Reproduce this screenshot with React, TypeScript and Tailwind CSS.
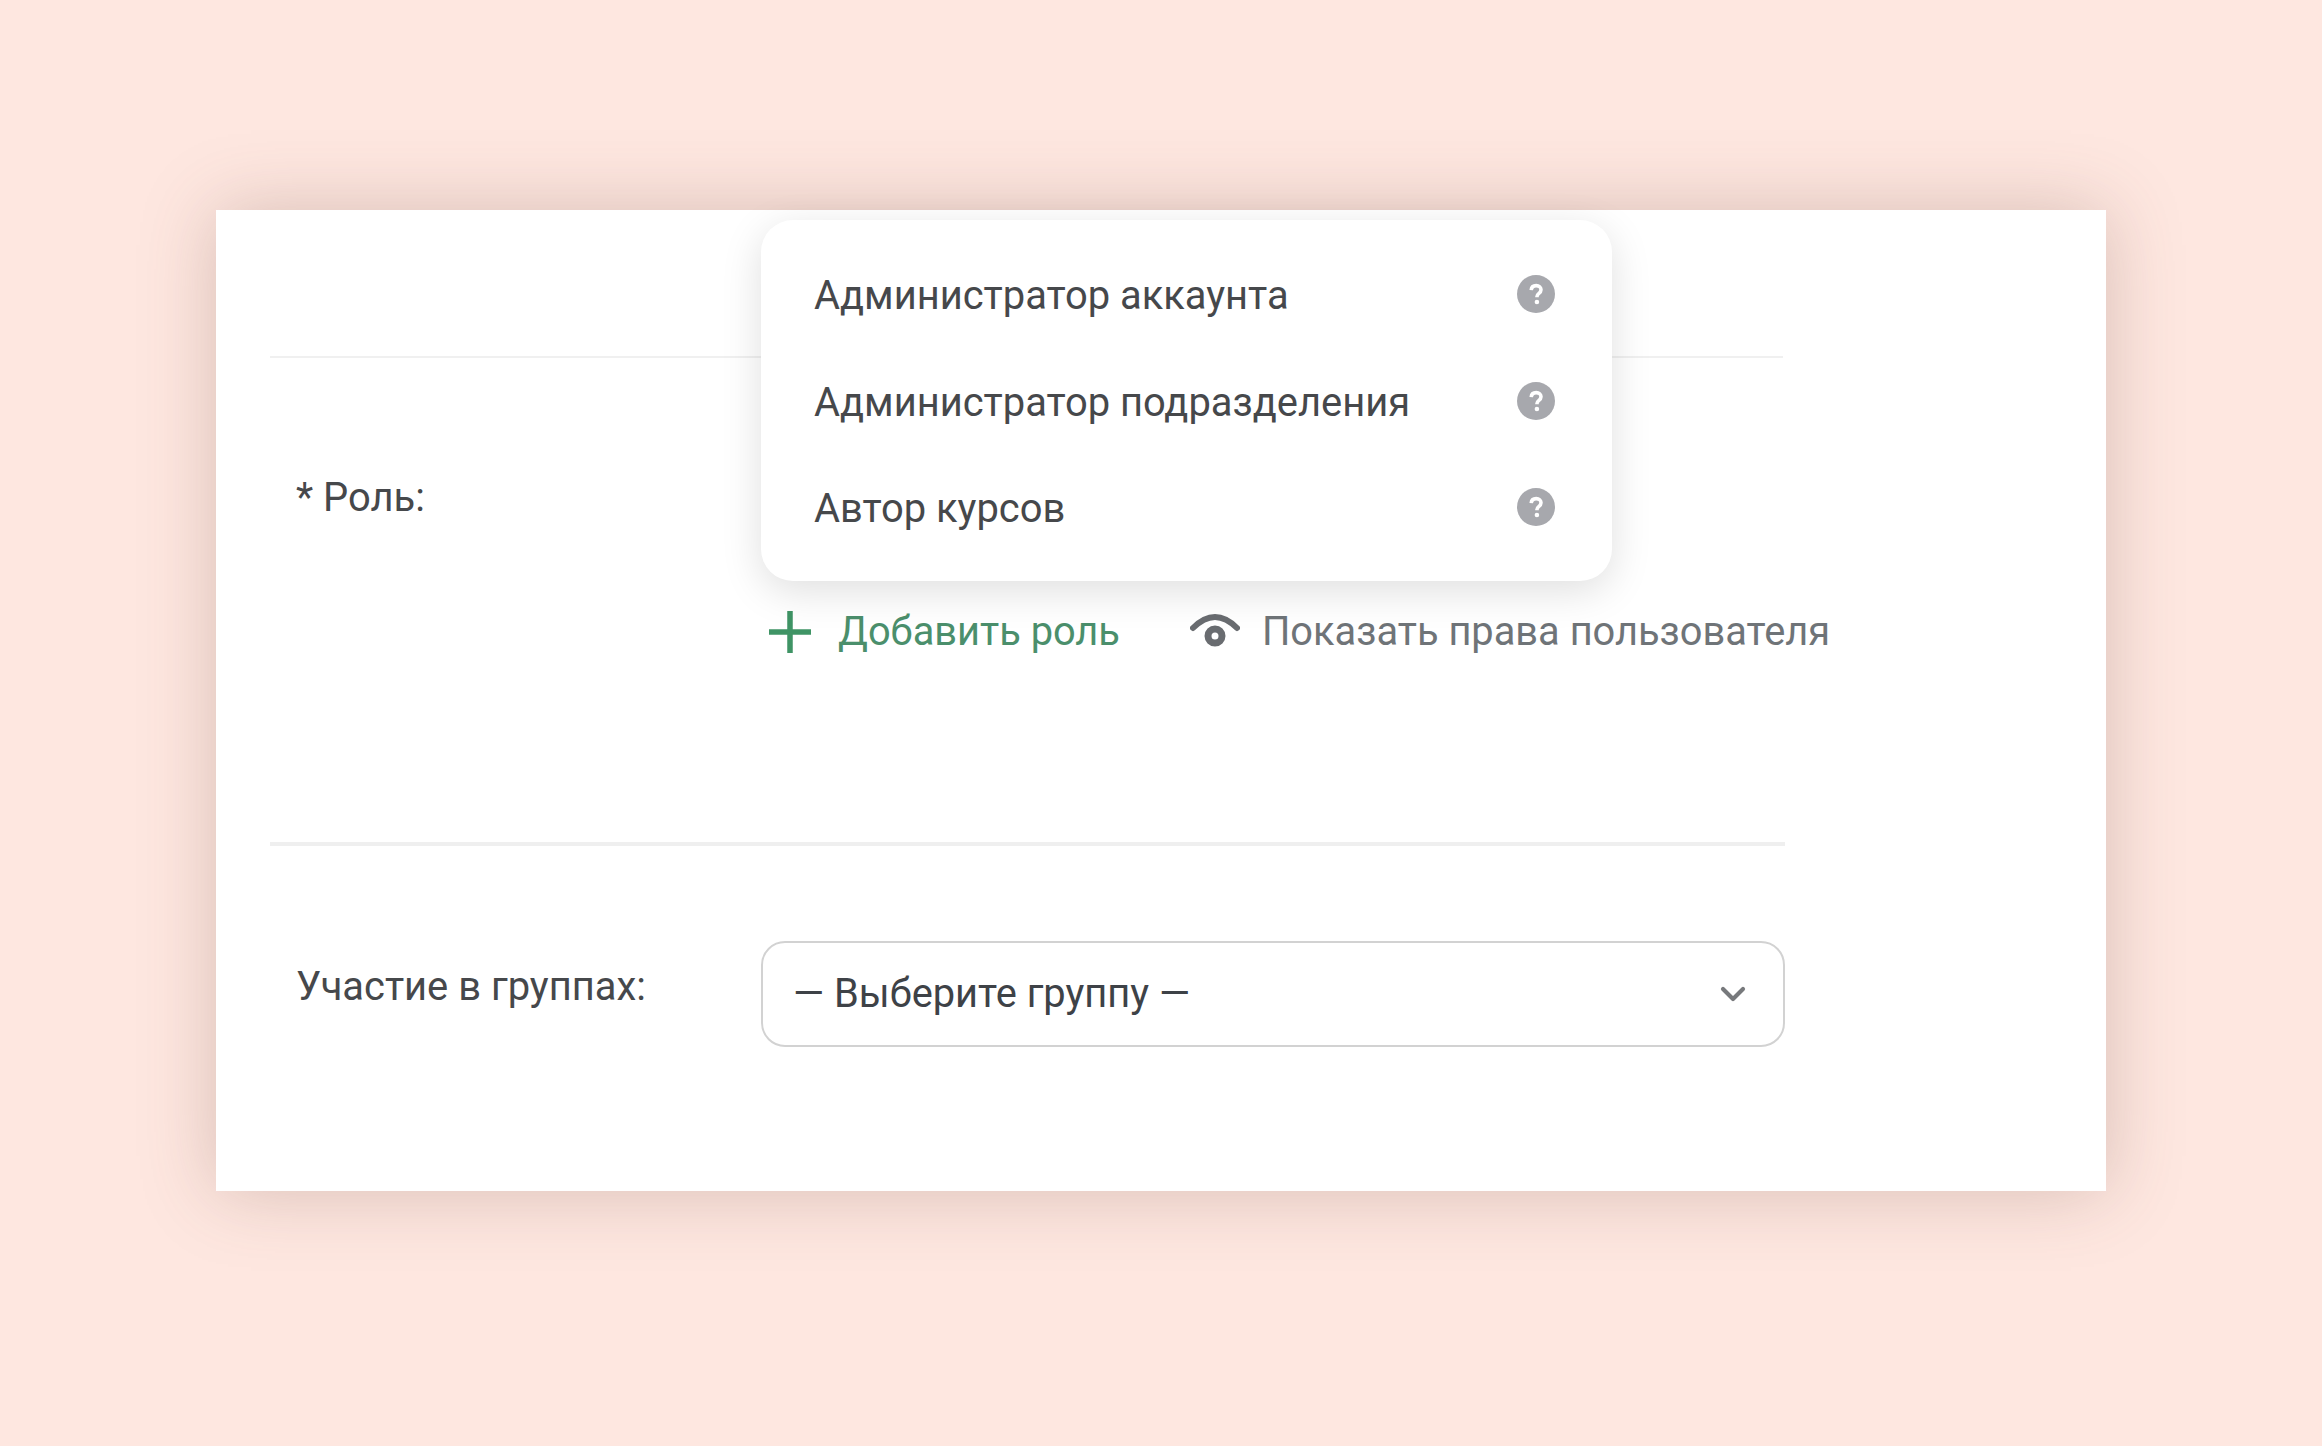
import React from "react";
import { ChevronDown } from "lucide-react";

const font = { fontFamily: '"Roboto", "Liberation Sans", sans-serif' };

function Help() {
  return (
    <svg width="38" height="38" viewBox="0 0 38 38" className="shrink-0">
      <circle cx="19" cy="19" r="19" fill="#a7a8ad" />
      <path d="M14.2 15.2c.2-3 2.2-4.600 5-4.600 2.900 0 4.800 1.700 4.800 4.100 0 1.900-1 2.900-2.300 3.900-1.200.9-1.700 1.500-1.700 3v.6" fill="none" stroke="#fff" strokeWidth="3.600" />
      <circle cx="19.900" cy="27" r="2.300" fill="#fff" />
    </svg>
  );
}

function Item({ label }: { label: string }) {
  return (
    <div className="flex h-[106.500px] items-center justify-between pl-[53px] pr-[57px]">
      <span className="relative top-[2px] text-[39.900px] leading-none text-[#46484b]">{label}</span>
      <Help />
    </div>
  );
}

export default function App() {
  return (
    <div className="h-[1446px] w-[2322px] overflow-hidden bg-[#fee7e0] pl-[216px] pt-[210px]" style={font}>
      <div className="relative h-[981px] w-[1890px] bg-white pl-[54px] pt-[146px] shadow-[0_0_70px_rgba(110,75,60,0.26)]">
        <div className="h-[2px] w-[1513px] bg-[#f0f0f0]" />

        <div className="flex h-[484px] w-[1515px]">
          <div className="w-[491px] shrink-0 pl-[26px] pt-[115px] text-[39.900px] leading-[50px] text-[#46484b]">* Роль:</div>
          <div className="flex flex-col pt-[249px]">
            <div className="flex h-[50px] items-center whitespace-nowrap text-[39.800px]">
              <div className="flex items-center text-[#4b8f6c]">
                <svg width="46" height="46" viewBox="0 0 46 46" className="ml-[6px] mr-[25px] shrink-0">
                  <path d="M23 2v42M2 23h42" stroke="#3f9465" strokeWidth="5.500" />
                </svg>
                Добавить роль
              </div>
              <div className="ml-[70px] flex items-center text-[#6f7478]">
                <svg width="50" height="36" viewBox="0 0 50 36" className="mr-[22px] shrink-0">
                  <path d="M3 14C10 7 17 3 25 3s15 4 22 11" fill="none" stroke="#696c70" strokeWidth="6" strokeLinecap="round" />
                  <circle cx="25" cy="22" r="7" fill="none" stroke="#696c70" strokeWidth="7" />
                </svg>
                Показать права пользователя
              </div>
            </div>
          </div>
        </div>

        <div className="h-[4px] w-[1515px] bg-[#efefef]" />

        <div className="flex w-[1515px] items-start pt-[95px]">
          <div className="w-[491px] shrink-0 pl-[26px] pt-[21px] text-[39.900px] leading-[50px] text-[#46484b]">Участие в группах:</div>
          <div className="flex h-[106px] w-[1024px] items-center justify-between rounded-[24px] border-2 border-[#d2d2d2] pl-[30px] pr-[30px] text-[39.800px] text-[#3e4247]">
            <span>— Выберите группу —</span>
            <ChevronDown size={40} strokeWidth={2.500} color="#77797c" />
          </div>
        </div>

        <div className="absolute left-[545px] top-[10px] w-[851px] rounded-[32px] bg-white pt-[21px] pb-[20px] shadow-[0_10px_40px_rgba(0,0,0,0.13)]">
          <Item label="Администратор аккаунта" />
          <Item label="Администратор подразделения" />
          <Item label="Автор курсов" />
        </div>
      </div>
    </div>
  );
}
